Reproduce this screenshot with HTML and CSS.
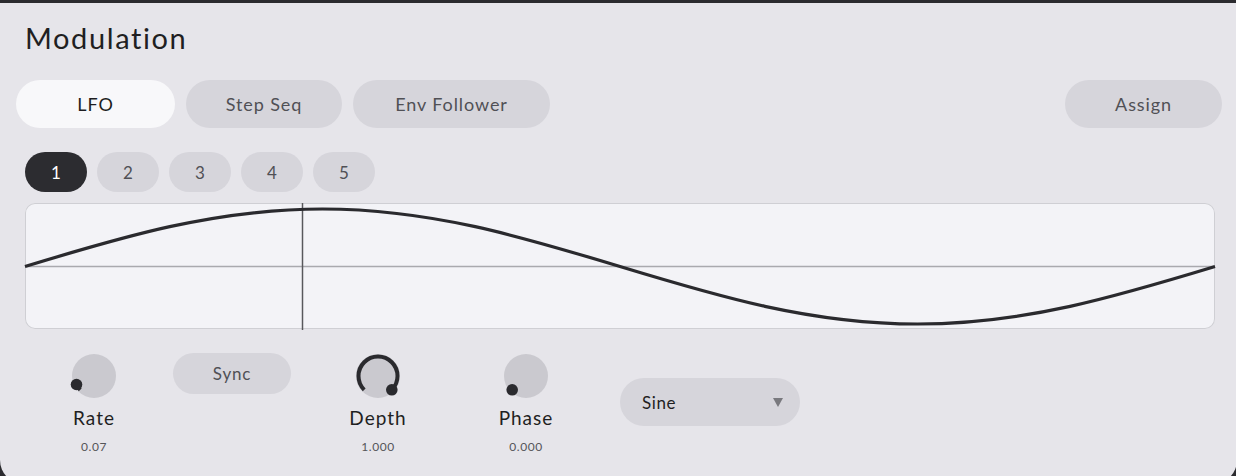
FILE: index.html
```html
<!DOCTYPE html>
<html>
<head>
<meta charset="utf-8">
<title>Modulation</title>
<link rel="stylesheet" href="styles.css">
</head>
<body>
<div class="panel">
  <h1 class="title">Modulation</h1>

  <div class="tabs">
    <button class="tab tab-active tab-lfo">LFO</button>
    <button class="tab tab-step">Step Seq</button>
    <button class="tab tab-env">Env Follower</button>
    <div class="spacer"></div>
    <button class="tab tab-assign">Assign</button>
  </div>

  <div class="slots">
    <button class="slot slot-active">1</button>
    <button class="slot">2</button>
    <button class="slot">3</button>
    <button class="slot">4</button>
    <button class="slot">5</button>
  </div>

  <div class="wave">
    <svg class="wave-svg" viewBox="0 0 1190 126" width="1190" height="126">
      <line x1="0" y1="63.5" x2="1190" y2="63.5" class="midline"/>
      <line x1="277.5" y1="0" x2="277.5" y2="127" class="playhead"/>
      <path class="curve" d="M0,63.5 C97,34 189.8,6 297.5,6 C405.2,6 498,34 595,63.5 C692,93 785.2,121 892.5,121 C999.8,121 1093,93 1190,63.5"/>
    </svg>
  </div>

  <div class="controls">
    <div class="knob-cell cell-rate">
      <svg class="knob" viewBox="-22 -22 44 44" width="44" height="44">
        <circle r="22" class="knob-body"/>
        <path class="knob-arc" d="M -13.8 13.8 A 19.5 19.5 0 0 1 -17.5 8.5"/>
        <circle cx="-17.5" cy="8.5" r="5.8" class="knob-dot"/>
      </svg>
      <div class="knob-label">Rate</div>
      <div class="knob-value">0.07</div>
    </div>

    <button class="sync">Sync</button>

    <div class="knob-cell cell-depth">
      <svg class="knob" viewBox="-22 -22 44 44" width="44" height="44">
        <circle r="22" class="knob-body"/>
        <path class="knob-arc" d="M -13.8 13.8 A 19.5 19.5 0 1 1 13.8 13.8"/>
        <circle cx="13.8" cy="13.8" r="5.8" class="knob-dot"/>
      </svg>
      <div class="knob-label">Depth</div>
      <div class="knob-value">1.000</div>
    </div>

    <div class="knob-cell cell-phase">
      <svg class="knob" viewBox="-22 -22 44 44" width="44" height="44">
        <circle r="22" class="knob-body"/>
        <circle cx="-13.8" cy="13.8" r="5.8" class="knob-dot"/>
      </svg>
      <div class="knob-label">Phase</div>
      <div class="knob-value">0.000</div>
    </div>

    <div class="select">
      <span class="select-text">Sine</span>
      <span class="select-arrow"></span>
    </div>
  </div>
</div>
</body>
</html>
```

FILE: styles.css
```css
html, body {
  margin: 0;
  padding: 0;
  height: 476px;
  overflow: hidden;
  background: #2b2b2f;
  font-family: "Lato", "Liberation Sans", sans-serif;
}

.panel {
  box-sizing: border-box;
  margin-top: 3px;
  width: 1237px;
  height: 481px;
  background: #e6e5ea;
  border-radius: 0 0 24px 24px;
  padding: 17px 15px 0 16px;
}

.title {
  margin: 0 0 0 9px;
  font-size: 29px;
  line-height: 36px;
  font-weight: 400;
  letter-spacing: 1.6px;
  color: #1f1f22;
}

.tabs {
  display: flex;
  gap: 11px;
  margin-top: 24px;
}

.spacer {
  flex: 1;
}

.tab {
  height: 48px;
  border: none;
  border-radius: 24px;
  background: #d6d5db;
  color: #505055;
  font-family: inherit;
  font-size: 18px;
  letter-spacing: 0.9px;
  padding: 0;
}

.tab-active {
  background: #f8f8fa;
  color: #1d1d20;
}

.tab-lfo { width: 159px; }
.tab-step { width: 156px; }
.tab-env { width: 197px; }
.tab-assign { width: 157px; }

.slots {
  display: flex;
  gap: 10px;
  margin: 24px 0 0 9px;
}

.slot {
  width: 62px;
  height: 40px;
  border: none;
  border-radius: 20px;
  background: #d6d5db;
  color: #505055;
  font-family: inherit;
  font-size: 17px;
  padding: 0;
}

.slot-active {
  background: #2c2c30;
  color: #ffffff;
}

.wave {
  box-sizing: border-box;
  margin: 11px 0 0 9px;
  width: 1190px;
  height: 126px;
  border-radius: 10px;
  background: #f3f3f7;
  box-shadow: inset 0 0 0 1px #cfcfd4;
}

.wave-svg {
  display: block;
  overflow: visible;
}

.midline {
  stroke: #a9a9ae;
  stroke-width: 1.5;
}

.playhead {
  stroke: #58585c;
  stroke-width: 1.5;
}

.curve {
  fill: none;
  stroke: #2a2a2e;
  stroke-width: 3.2;
}

.controls {
  display: flex;
  align-items: flex-start;
  margin: 25px 0 0 33px;
}

.knob-cell {
  width: 90px;
  display: flex;
  flex-direction: column;
  align-items: center;
}

.knob {
  display: block;
  overflow: visible;
}

.knob-body {
  fill: #cac9cf;
}

.knob-arc {
  fill: none;
  stroke: #2a2a2e;
  stroke-width: 4;
}

.knob-dot {
  fill: #2a2a2e;
}

.knob-label {
  margin-top: 8px;
  font-size: 19px;
  line-height: 24px;
  letter-spacing: 1px;
  color: #1f1f22;
}

.knob-value {
  margin-top: 9px;
  font-size: 12px;
  line-height: 16px;
  letter-spacing: 0.6px;
  color: #555559;
}

.sync {
  margin: -1px 0 0 34px;
  width: 118px;
  height: 41px;
  border: none;
  border-radius: 21px;
  background: #d6d5db;
  color: #505055;
  font-family: inherit;
  font-size: 17px;
  letter-spacing: 0.8px;
  padding: 0;
}

.cell-depth { margin-left: 42px; }
.cell-phase { margin-left: 58px; }

.select {
  box-sizing: border-box;
  margin: 24px 0 0 49px;
  width: 180px;
  height: 48px;
  border-radius: 24px;
  background: #d6d5db;
  display: flex;
  align-items: center;
  justify-content: space-between;
  padding: 0 17px 0 22px;
}

.select-text {
  font-size: 17px;
  letter-spacing: 0.6px;
  color: #1f1f22;
}

.select-arrow {
  width: 0;
  height: 0;
  border-left: 5.5px solid transparent;
  border-right: 5.5px solid transparent;
  border-top: 9px solid #79797e;
}
```
